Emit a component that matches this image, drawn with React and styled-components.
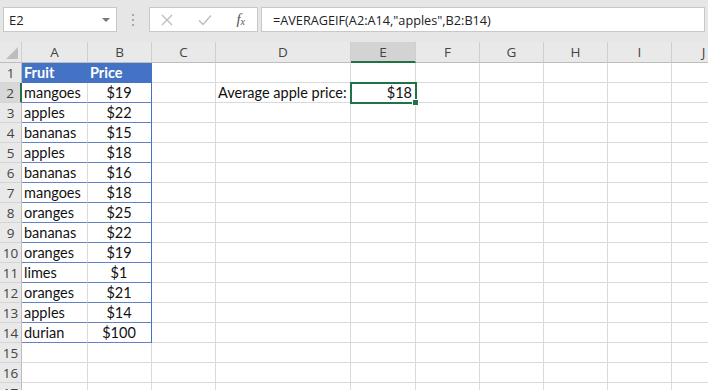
import React from "react";
import styled, { createGlobalStyle, css } from "styled-components";

const GlobalStyle = createGlobalStyle`
  body {
    margin: 0;
    background: #fff;
    font-family: "Lato", "Liberation Sans", sans-serif;
  }
`;

const Window = styled.div`
  width: 708px;
  height: 390px;
  overflow: hidden;
  background: #fff;
`;

const FormulaBar = styled.div`
  height: 42px;
  box-sizing: border-box;
  padding: 7px 3px 0 3px;
  background: #e6e6e6;
  display: flex;
  align-items: flex-start;
`;

const BarBox = styled.div`
  height: 25px;
  box-sizing: border-box;
  background: #fff;
  border: 1px solid #c8c8c8;
  display: flex;
  align-items: center;
`;

const NameBox = styled(BarBox)`
  width: 114px;
  padding: 0 6px 0 5px;
  justify-content: space-between;
  font-family: "Open Sans", sans-serif;
  font-size: 13px;
  color: #222;
`;

const DropArrow = styled.span`
  width: 0;
  height: 0;
  border-left: 4px solid transparent;
  border-right: 4px solid transparent;
  border-top: 4px solid #777;
`;

const Grip = styled.div`
  width: 32px;
  height: 25px;
  display: flex;
  flex-direction: column;
  align-items: center;
  justify-content: center;
  gap: 3px;
`;

const GripDot = styled.span`
  width: 2px;
  height: 2px;
  background: #a8a8a8;
`;

const FnBox = styled(BarBox)`
  width: 109px;
  padding: 0 12px 0 11px;
  justify-content: space-between;
`;

const FxLabel = styled.span`
  font-family: "Liberation Serif", serif;
  font-style: italic;
  font-size: 15px;
  color: #555;
  sub {
    font-size: 10px;
    vertical-align: -1px;
  }
`;

const FormulaInput = styled(BarBox)`
  flex: 1;
  margin-left: 3px;
  padding-left: 11px;
  font-family: "Open Sans", sans-serif;
  font-size: 12.7px;
  color: #222;
`;

const Sheet = styled.div`
  display: grid;
  grid-template-columns: 22px 66px 64px 64px 135px 65px 64px 64px 64px 64px 64px;
  grid-template-rows: 21px;
  grid-auto-rows: 20px;
`;

const Cell = styled.div`
  box-sizing: border-box;
  border-right: 1px solid #dadada;
  border-bottom: 1px solid #dadada;
  font-size: 14.5px;
  color: #111;
  display: flex;
  align-items: center;
  padding: 0 3px 0 2px;
  white-space: nowrap;
  overflow: visible;
  position: relative;
  justify-content: ${(p) =>
    p.$align === "center" ? "center" : p.$align === "right" ? "flex-end" : "flex-start"};

  ${(p) =>
    p.$tableHead &&
    css`
      background: #4472c4;
      color: #fff;
      font-weight: 700;
      border-right-color: #4472c4;
      border-bottom-color: #4472c4;
    `}

  ${(p) =>
    p.$tableBody &&
    css`
      border-bottom-color: #6383c4;
    `}

  ${(p) =>
    p.$tableEdge &&
    css`
      border-right-color: #4472c4;
    `}

  ${(p) =>
    p.$selected &&
    css`
      z-index: 2;
      outline: 2px solid #217346;
      outline-offset: -1px;
      &::after {
        content: "";
        position: absolute;
        right: -4px;
        bottom: -4px;
        width: 5px;
        height: 5px;
        background: #217346;
        border: 1px solid #fff;
      }
    `}
`;

const ColHead = styled.div`
  box-sizing: border-box;
  background: ${(p) => (p.$active ? "#d3d3d3" : "#e9e9e9")};
  border-right: 1px solid #cfcfcf;
  border-bottom: ${(p) => (p.$active ? "2px solid #217346" : "1px solid #bdbdbd")};
  display: flex;
  align-items: center;
  justify-content: center;
  font-family: "Open Sans", sans-serif;
  font-size: 13.5px;
  color: #444;
`;

const Corner = styled(ColHead)`
  align-items: flex-end;
  justify-content: flex-end;
  padding: 0 3px 3px 0;
`;

const RowHead = styled.div`
  box-sizing: border-box;
  background: ${(p) => (p.$active ? "#d8d8d8" : "#e9e9e9")};
  border-right: ${(p) => (p.$active ? "2px solid #217346" : "1px solid #bdbdbd")};
  border-bottom: 1px solid #d4d4d4;
  display: flex;
  align-items: center;
  justify-content: center;
  font-family: "Open Sans", sans-serif;
  font-size: 13.5px;
  color: #444;
`;

const columns = ["A", "B", "C", "D", "E", "F", "G", "H", "I", "J"];

const fruits = [
  ["mangoes", "$19"],
  ["apples", "$22"],
  ["bananas", "$15"],
  ["apples", "$18"],
  ["bananas", "$16"],
  ["mangoes", "$18"],
  ["oranges", "$25"],
  ["bananas", "$22"],
  ["oranges", "$19"],
  ["limes", "$1"],
  ["oranges", "$21"],
  ["apples", "$14"],
  ["durian", "$100"],
];

const cellFor = (row, col) => {
  if (row === 1) {
    if (col === 0) return { text: "Fruit", $tableHead: true };
    if (col === 1) return { text: "Price", $tableHead: true };
  }
  const item = fruits[row - 2];
  if (item && col === 0) return { text: item[0], $tableBody: true };
  if (item && col === 1) return { text: item[1], $tableBody: true, $tableEdge: true, $align: "center" };
  if (row === 2 && col === 3) return { text: "Average apple price:" };
  if (row === 2 && col === 4) return { text: "$18", $align: "right", $selected: true };
  return { text: "" };
};

const CloseIcon = () => (
  <svg width="12" height="12" viewBox="0 0 12 12">
    <path d="M1 1 L11 11 M11 1 L1 11" stroke="#bcbcbc" strokeWidth="1.3" fill="none" />
  </svg>
);

const CheckIcon = () => (
  <svg width="14" height="12" viewBox="0 0 14 12">
    <path d="M1 6.5 L5 10.5 L13 1.5" stroke="#bcbcbc" strokeWidth="1.3" fill="none" />
  </svg>
);

const CornerTriangle = () => (
  <svg width="12" height="12" viewBox="0 0 12 12">
    <polygon points="12,0 12,12 0,12" fill="#bdbdbd" />
  </svg>
);

export default function App() {
  const rows = Array.from({ length: 17 }, (_, i) => i + 1);
  return (
    <>
      <GlobalStyle />
      <Window>
        <FormulaBar>
          <NameBox>
            E2
            <DropArrow />
          </NameBox>
          <Grip>
            <GripDot />
            <GripDot />
            <GripDot />
          </Grip>
          <FnBox>
            <CloseIcon />
            <CheckIcon />
            <FxLabel>
              f<sub>x</sub>
            </FxLabel>
          </FnBox>
          <FormulaInput>=AVERAGEIF(A2:A14,"apples",B2:B14)</FormulaInput>
        </FormulaBar>
        <Sheet>
          <Corner>
            <CornerTriangle />
          </Corner>
          {columns.map((c) => (
            <ColHead key={c} $active={c === "E"}>
              {c}
            </ColHead>
          ))}
          {rows.map((r) => (
            <React.Fragment key={r}>
              <RowHead $active={r === 2}>{r}</RowHead>
              {columns.map((c, ci) => {
                const { text, ...props } = cellFor(r, ci);
                return (
                  <Cell key={c} {...props}>
                    {text}
                  </Cell>
                );
              })}
            </React.Fragment>
          ))}
        </Sheet>
      </Window>
    </>
  );
}
